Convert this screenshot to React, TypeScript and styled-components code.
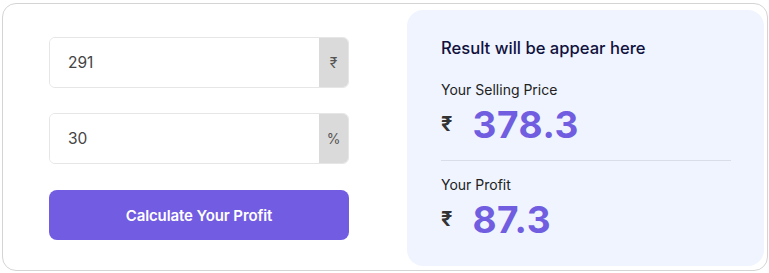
import { createGlobalStyle, styled } from "styled-components";

const GlobalStyle = createGlobalStyle`
  body {
    margin: 0;
    background: #ffffff;
    font-family: Inter, "Noto Sans", sans-serif;
  }
`

const Card = styled.div`
  display: flex;
  margin: 3px 1px 0 2px;
  height: 268px;
  box-sizing: border-box;
  padding: 6px 3px 4px 46px;
  border: 1px solid #d4d4d4;
  border-radius: 14px;
`

const Form = styled.div`
  display: flex;
  flex-direction: column;
  gap: 25px;
  width: 300px;
  padding-top: 27px;
  margin-right: 58px;
`

const InputGroup = styled.div`
  display: flex;
  height: 51px;
  border: 1px solid #e6e6e6;
  border-radius: 6px;
  overflow: hidden;
  box-sizing: border-box;
`

const Input = styled.input`
  flex: 1;
  min-width: 0;
  border: none;
  outline: none;
  padding: 0 0 0 18px;
  font-family: Inter, sans-serif;
  font-size: 15.5px;
  color: #444;
  background: #fff;
`

const Addon = styled.span`
  display: flex;
  align-items: center;
  justify-content: center;
  width: 29px;
  background: #dadada;
  color: #555;
  font-size: 14px;
`

const Button = styled.button`
  height: 50px;
  margin-top: 1px;
  border: none;
  border-radius: 8px;
  background: #725ce1;
  color: #fff;
  font-family: Inter, sans-serif;
  font-size: 15px;
  font-weight: 600;
  letter-spacing: -0.1px;
  cursor: pointer;
`

const ResultPanel = styled.div`
  flex: 1;
  display: flex;
  flex-direction: column;
  padding: 28px 33px 0 34px;
  background: #eff4ff;
  border-radius: 16px;
`

const Title = styled.h3`
  margin: 0 0 23px;
  font-size: 16.6px;
  line-height: 20px;
  font-weight: 500;
  color: #11113d;
`

const Label = styled.div`
  font-size: 14px;
  line-height: 18px;
  color: #222;
`

const Amount = styled.div`
  display: flex;
  align-items: center;
  gap: 20px;
  margin-top: 3px;
  height: 44px;
`

const Rupee = styled.span`
  font-size: 20px;
  font-weight: 700;
  color: #333;
`

const Value = styled.span`
  font-size: 37px;
  font-weight: 700;
  color: #705ddf;
  letter-spacing: 0.6px;
`

const Divider = styled.hr`
  margin: 14px 0 15px;
  border: none;
  border-top: 1px solid #d8dde9;
`

const App = () => {
  return (
    <>
      <GlobalStyle />
      <Card>
        <Form>
          <InputGroup>
            <Input defaultValue="291" />
            <Addon>₹</Addon>
          </InputGroup>
          <InputGroup>
            <Input defaultValue="30" />
            <Addon>%</Addon>
          </InputGroup>
          <Button>Calculate Your Profit</Button>
        </Form>
        <ResultPanel>
          <Title>Result will be appear here</Title>
          <Label>Your Selling Price</Label>
          <Amount>
            <Rupee>₹</Rupee>
            <Value>378.3</Value>
          </Amount>
          <Divider />
          <Label>Your Profit</Label>
          <Amount>
            <Rupee>₹</Rupee>
            <Value>87.3</Value>
          </Amount>
        </ResultPanel>
      </Card>
    </>
  )
}

export default App;
